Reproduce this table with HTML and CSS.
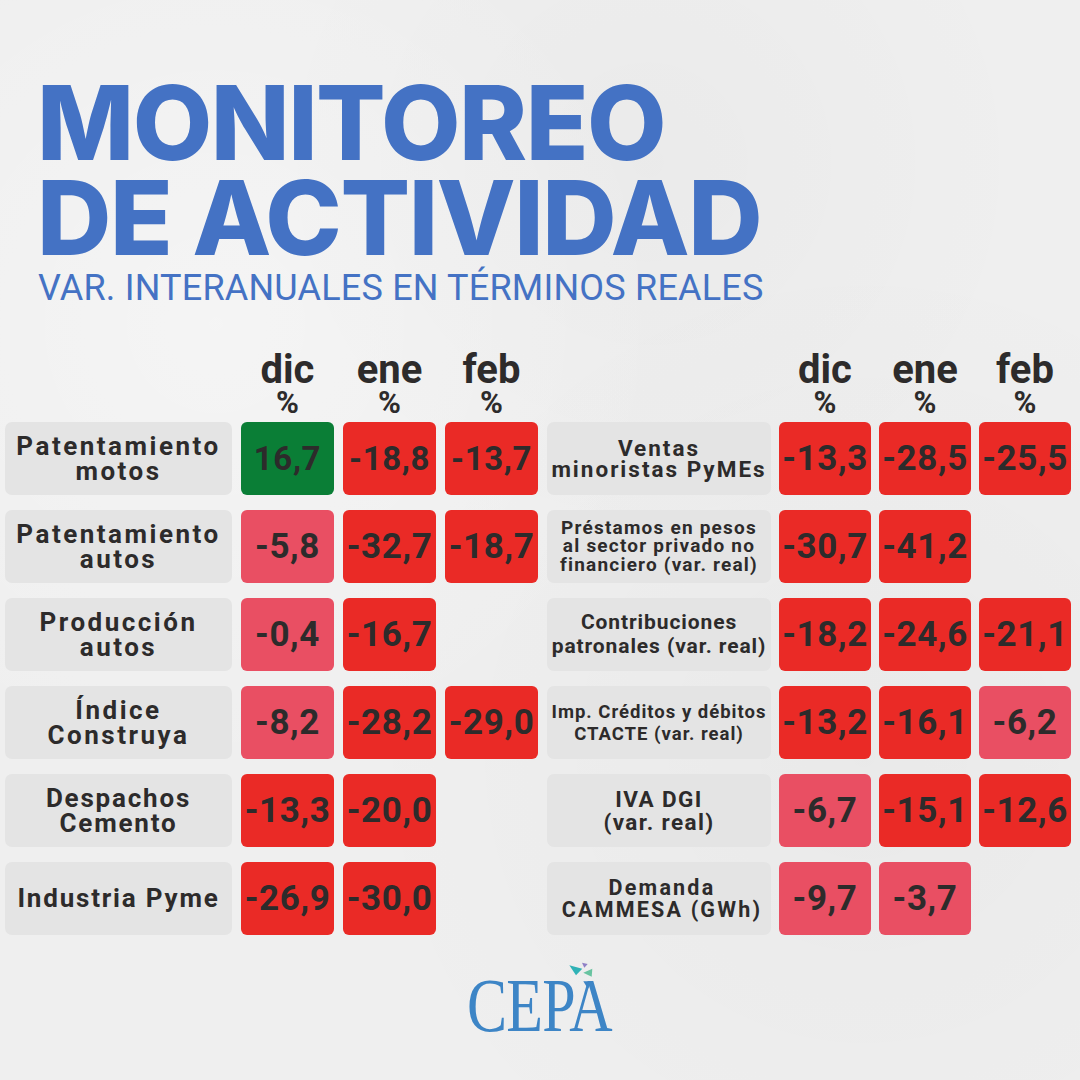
FILE: index.html
```html
<!DOCTYPE html>
<html lang="es">
<head>
<meta charset="utf-8">
<title>Monitoreo de actividad</title>
<link rel="stylesheet" href="styles.css">
</head>
<body>
<div class="page">
  <header class="title-block">
    <h1 class="title"><span>MONITOREO</span><span>DE ACTIVIDAD</span></h1>
    <p class="subtitle">VAR. INTERANUALES EN TÉRMINOS REALES</p>
  </header>

  <section class="tables">
    <div class="panel panel-left">
      <div class="head">
        <div></div>
        <div class="month"><span class="m-name">dic</span><span class="m-pct">%</span></div>
        <div class="month"><span class="m-name">ene</span><span class="m-pct">%</span></div>
        <div class="month"><span class="m-name">feb</span><span class="m-pct">%</span></div>
      </div>
      <div class="rows">
        <div class="label">Patentamiento<br>motos</div>
        <div class="cell up small">16,7</div>
        <div class="cell down small">-18,8</div>
        <div class="cell down small">-13,7</div>

        <div class="label">Patentamiento<br>autos</div>
        <div class="cell soft">-5,8</div>
        <div class="cell down">-32,7</div>
        <div class="cell down">-18,7</div>

        <div class="label">Producción<br>autos</div>
        <div class="cell soft">-0,4</div>
        <div class="cell down">-16,7</div>
        <div class="cell empty"></div>

        <div class="label">Índice<br>Construya</div>
        <div class="cell soft">-8,2</div>
        <div class="cell down">-28,2</div>
        <div class="cell down">-29,0</div>

        <div class="label l-tight">Despachos<br>Cemento</div>
        <div class="cell down">-13,3</div>
        <div class="cell down">-20,0</div>
        <div class="cell empty"></div>

        <div class="label l-tight">Industria Pyme</div>
        <div class="cell down">-26,9</div>
        <div class="cell down">-30,0</div>
        <div class="cell empty"></div>
      </div>
    </div>

    <div class="panel panel-right">
      <div class="head">
        <div></div>
        <div class="month"><span class="m-name">dic</span><span class="m-pct">%</span></div>
        <div class="month"><span class="m-name">ene</span><span class="m-pct">%</span></div>
        <div class="month"><span class="m-name">feb</span><span class="m-pct">%</span></div>
      </div>
      <div class="rows">
        <div class="label r-ventas">Ventas<br>minoristas PyMEs</div>
        <div class="cell down">-13,3</div>
        <div class="cell down">-28,5</div>
        <div class="cell down">-25,5</div>

        <div class="label r-prestamos">Préstamos en pesos<br>al sector privado no<br>financiero (var. real)</div>
        <div class="cell down">-30,7</div>
        <div class="cell down">-41,2</div>
        <div class="cell empty"></div>

        <div class="label r-contrib">Contribuciones<br>patronales (var. real)</div>
        <div class="cell down">-18,2</div>
        <div class="cell down">-24,6</div>
        <div class="cell down">-21,1</div>

        <div class="label r-imp">Imp. Créditos y débitos<br>CTACTE (var. real)</div>
        <div class="cell down">-13,2</div>
        <div class="cell down">-16,1</div>
        <div class="cell soft">-6,2</div>

        <div class="label r-iva">IVA DGI<br>(var. real)</div>
        <div class="cell soft">-6,7</div>
        <div class="cell down">-15,1</div>
        <div class="cell down">-12,6</div>

        <div class="label r-dem">Demanda<br>CAMMESA (GWh)</div>
        <div class="cell soft">-9,7</div>
        <div class="cell soft">-3,7</div>
        <div class="cell empty"></div>
      </div>
    </div>
  </section>

  <footer class="logo-wrap">
    <div class="logo">
      <svg class="logo-marks" viewBox="0 0 146 40" width="146" height="40" aria-hidden="true">
        <polygon points="102.3,4.3 115.3,7.7 109,14.3" fill="#2fb2b6"/>
        <polygon points="115,1.7 120.7,3 117.3,6.7" fill="#8f7fc6"/>
        <polygon points="116.3,11.7 125.3,7.7 124.7,15.7" fill="#68c3a0"/>
        <polygon points="116.3,20.3 125.3,20.3 121,27.7" fill="#3d85c6"/>
      </svg>
      <span class="logo-text">CEPA</span>
    </div>
  </footer>
</div>
</body>
</html>
```

FILE: styles.css
```css
html, body {
  margin: 0;
  padding: 0;
}

body {
  background-color: #efefef;
  background-image:
    radial-gradient(circle at 20% 30%, rgba(255,255,255,0.35), rgba(255,255,255,0) 40%),
    radial-gradient(circle at 80% 70%, rgba(0,0,0,0.025), rgba(0,0,0,0) 45%),
    radial-gradient(circle at 60% 15%, rgba(0,0,0,0.02), rgba(0,0,0,0) 35%);
  font-family: Roboto, "Liberation Sans", sans-serif;
  color: #2d2b2b;
}

.page {
  width: 1080px;
  height: 1080px;
  overflow: hidden;
}

/* Title */
.title-block {
  padding: 75px 0 0 37px;
}

.title {
  margin: 0;
  font-family: Inter, "Liberation Sans", sans-serif;
  font-weight: 800;
  font-size: 103px;
  line-height: 95px;
  color: #4472c4;
  letter-spacing: -1.5px;
}

.title span {
  display: block;
}

.subtitle {
  margin: 5px 0 0 1px;
  font-family: Roboto, "Liberation Sans", sans-serif;
  font-weight: 400;
  font-size: 36px;
  line-height: 36px;
  letter-spacing: 0.2px;
  color: #4472c4;
}

/* Tables */
.tables {
  display: flex;
  margin-top: 44px;
}

.panel-left {
  margin-left: 5px;
  --label-w: 227px;
  --cell-w: 93px;
  --col-gap: 9px;
}

.panel-right {
  margin-left: 9px;
  --label-w: 224px;
  --cell-w: 92px;
  --col-gap: 8px;
}

.head,
.rows {
  display: grid;
  grid-template-columns: var(--label-w) var(--cell-w) var(--cell-w) var(--cell-w);
  column-gap: var(--col-gap);
}

.head {
  margin-bottom: 4px;
}

.month {
  display: flex;
  flex-direction: column;
  align-items: center;
  font-weight: 700;
  color: #2d2b2b;
}

.m-name {
  font-size: 40px;
  line-height: 34px;
  padding-top: 3px;
}

.m-pct {
  font-size: 31px;
  line-height: 31px;
}

.rows {
  grid-auto-rows: 73px;
  row-gap: 15px;
}

.label {
  background: #e4e4e4;
  border-radius: 7px;
  display: flex;
  align-items: center;
  justify-content: center;
  text-align: center;
  font-weight: 700;
  font-size: 26px;
  line-height: 25px;
  letter-spacing: 2.5px;
  white-space: nowrap;
}

.label.l-tight {
  letter-spacing: 1.8px;
}

.r-ventas {
  font-size: 22.5px;
  line-height: 21px;
  letter-spacing: 2px;
}

.r-prestamos {
  font-size: 19px;
  line-height: 18.5px;
  letter-spacing: 1.2px;
}

.r-contrib {
  font-size: 21px;
  line-height: 23.5px;
  letter-spacing: 0.9px;
}

.r-imp {
  font-size: 18.5px;
  line-height: 22px;
  letter-spacing: 1px;
}

.r-iva {
  font-size: 22.5px;
  line-height: 22.5px;
  letter-spacing: 1.4px;
}

.r-dem {
  font-size: 21.5px;
  line-height: 21.5px;
  letter-spacing: 2.2px;
  padding-left: 6px;
}

.cell {
  border-radius: 6px;
  display: flex;
  align-items: center;
  justify-content: center;
  font-weight: 700;
  font-size: 35px;
  letter-spacing: 0.6px;
  color: #2d2b2b;
  white-space: nowrap;
}

.cell.small {
  font-size: 33px;
}

.cell.up {
  background: #0a7e36;
}

.cell.down {
  background: #ea2a26;
}

.cell.soft {
  background: #e94f63;
}

.cell.empty {
  background: transparent;
}

/* Logo */
.logo-wrap {
  display: flex;
  justify-content: center;
  margin-top: 26px;
}

.logo {
  position: relative;
  width: 146px;
  height: 82px;
  padding-top: 6px;
  box-sizing: border-box;
}

.logo-marks {
  position: absolute;
  left: 0;
  top: 0;
}

.logo-text {
  display: inline-block;
  font-family: "Liberation Serif", serif;
  font-size: 76px;
  line-height: 76px;
  color: #3d85c6;
  transform: scaleX(0.79);
  transform-origin: left center;
  letter-spacing: -1px;
}
```
